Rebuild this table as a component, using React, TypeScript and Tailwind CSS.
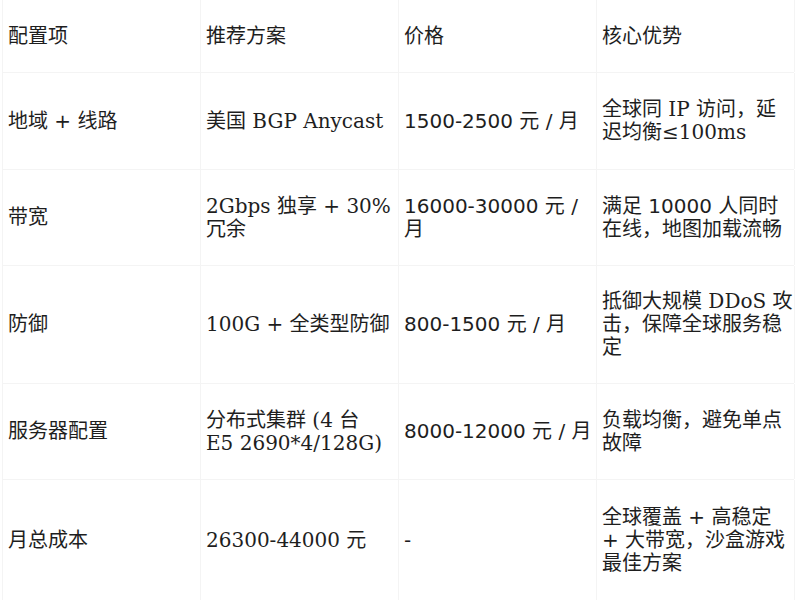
import React from "react";

type Cell = { text: React.ReactNode; sans?: boolean };
type Row = { h: string; cells: Cell[] };

const serif = "font-['DejaVu_Serif','Noto_Sans_CJK_SC',serif]";
const sans = "font-['DejaVu_Sans','Noto_Sans_CJK_SC',sans-serif]";

const rows: Row[] = [
  {
    h: "h-[73px]",
    cells: [{ text: "配置项" }, { text: "推荐方案" }, { text: "价格" }, { text: "核心优势" }],
  },
  {
    h: "h-[97px]",
    cells: [
      { text: "地域 + 线路", sans: true },
      { text: "美国 BGP Anycast" },
      { text: "1500-2500 元 / 月", sans: true },
      { text: <>全球同 IP 访问，延<br />迟均衡≤100ms</> },
    ],
  },
  {
    h: "h-[96px]",
    cells: [
      { text: "带宽" },
      { text: <>2Gbps 独享 + 30%<br />冗余</> },
      { text: <>16000-30000 元 /<br />月</>, sans: true },
      { text: <>满足 10000 人同时<br />在线，地图加载流畅</>, sans: true },
    ],
  },
  {
    h: "h-[118px]",
    cells: [
      { text: "防御" },
      { text: "100G + 全类型防御" },
      { text: "800-1500 元 / 月", sans: true },
      { text: <>抵御大规模 DDoS 攻<br />击，保障全球服务稳<br />定</> },
    ],
  },
  {
    h: "h-[96px]",
    cells: [
      { text: "服务器配置" },
      { text: <>分布式集群 (4 台<br />E5 2690*4/128G)</> },
      { text: "8000-12000 元 / 月", sans: true },
      { text: <>负载均衡，避免单点<br />故障</> },
    ],
  },
  {
    h: "h-[120px]",
    cells: [
      { text: "月总成本" },
      { text: "26300-44000 元" },
      { text: "-", sans: true },
      { text: <>全球覆盖 + 高稳定<br />+ 大带宽，沙盒游戏<br />最佳方案</>, sans: true },
    ],
  },
];

export default function App() {
  return (
    <div className="w-[800px] h-[600px] bg-white overflow-hidden text-[#1e1e1e]">
      <div className="ml-[2px] w-[792px] border-l border-[#f4f4f4]">
        {rows.map((row, ri) => (
          <div
            key={ri}
            className={`grid grid-cols-[198px_198px_198px_198px] ${row.h} ${ri < rows.length - 1 ? "border-b border-[#f4f4f4]" : ""}`}
          >
            {row.cells.map((c, ci) => (
              <div
                key={ci}
                className={`flex items-center pl-[5px] pr-[2px] border-r border-[#f4f4f4] text-[20px] leading-[23px] whitespace-nowrap ${c.sans ? sans : serif}`}
              >
                <div>{c.text}</div>
              </div>
            ))}
          </div>
        ))}
      </div>
    </div>
  );
}
